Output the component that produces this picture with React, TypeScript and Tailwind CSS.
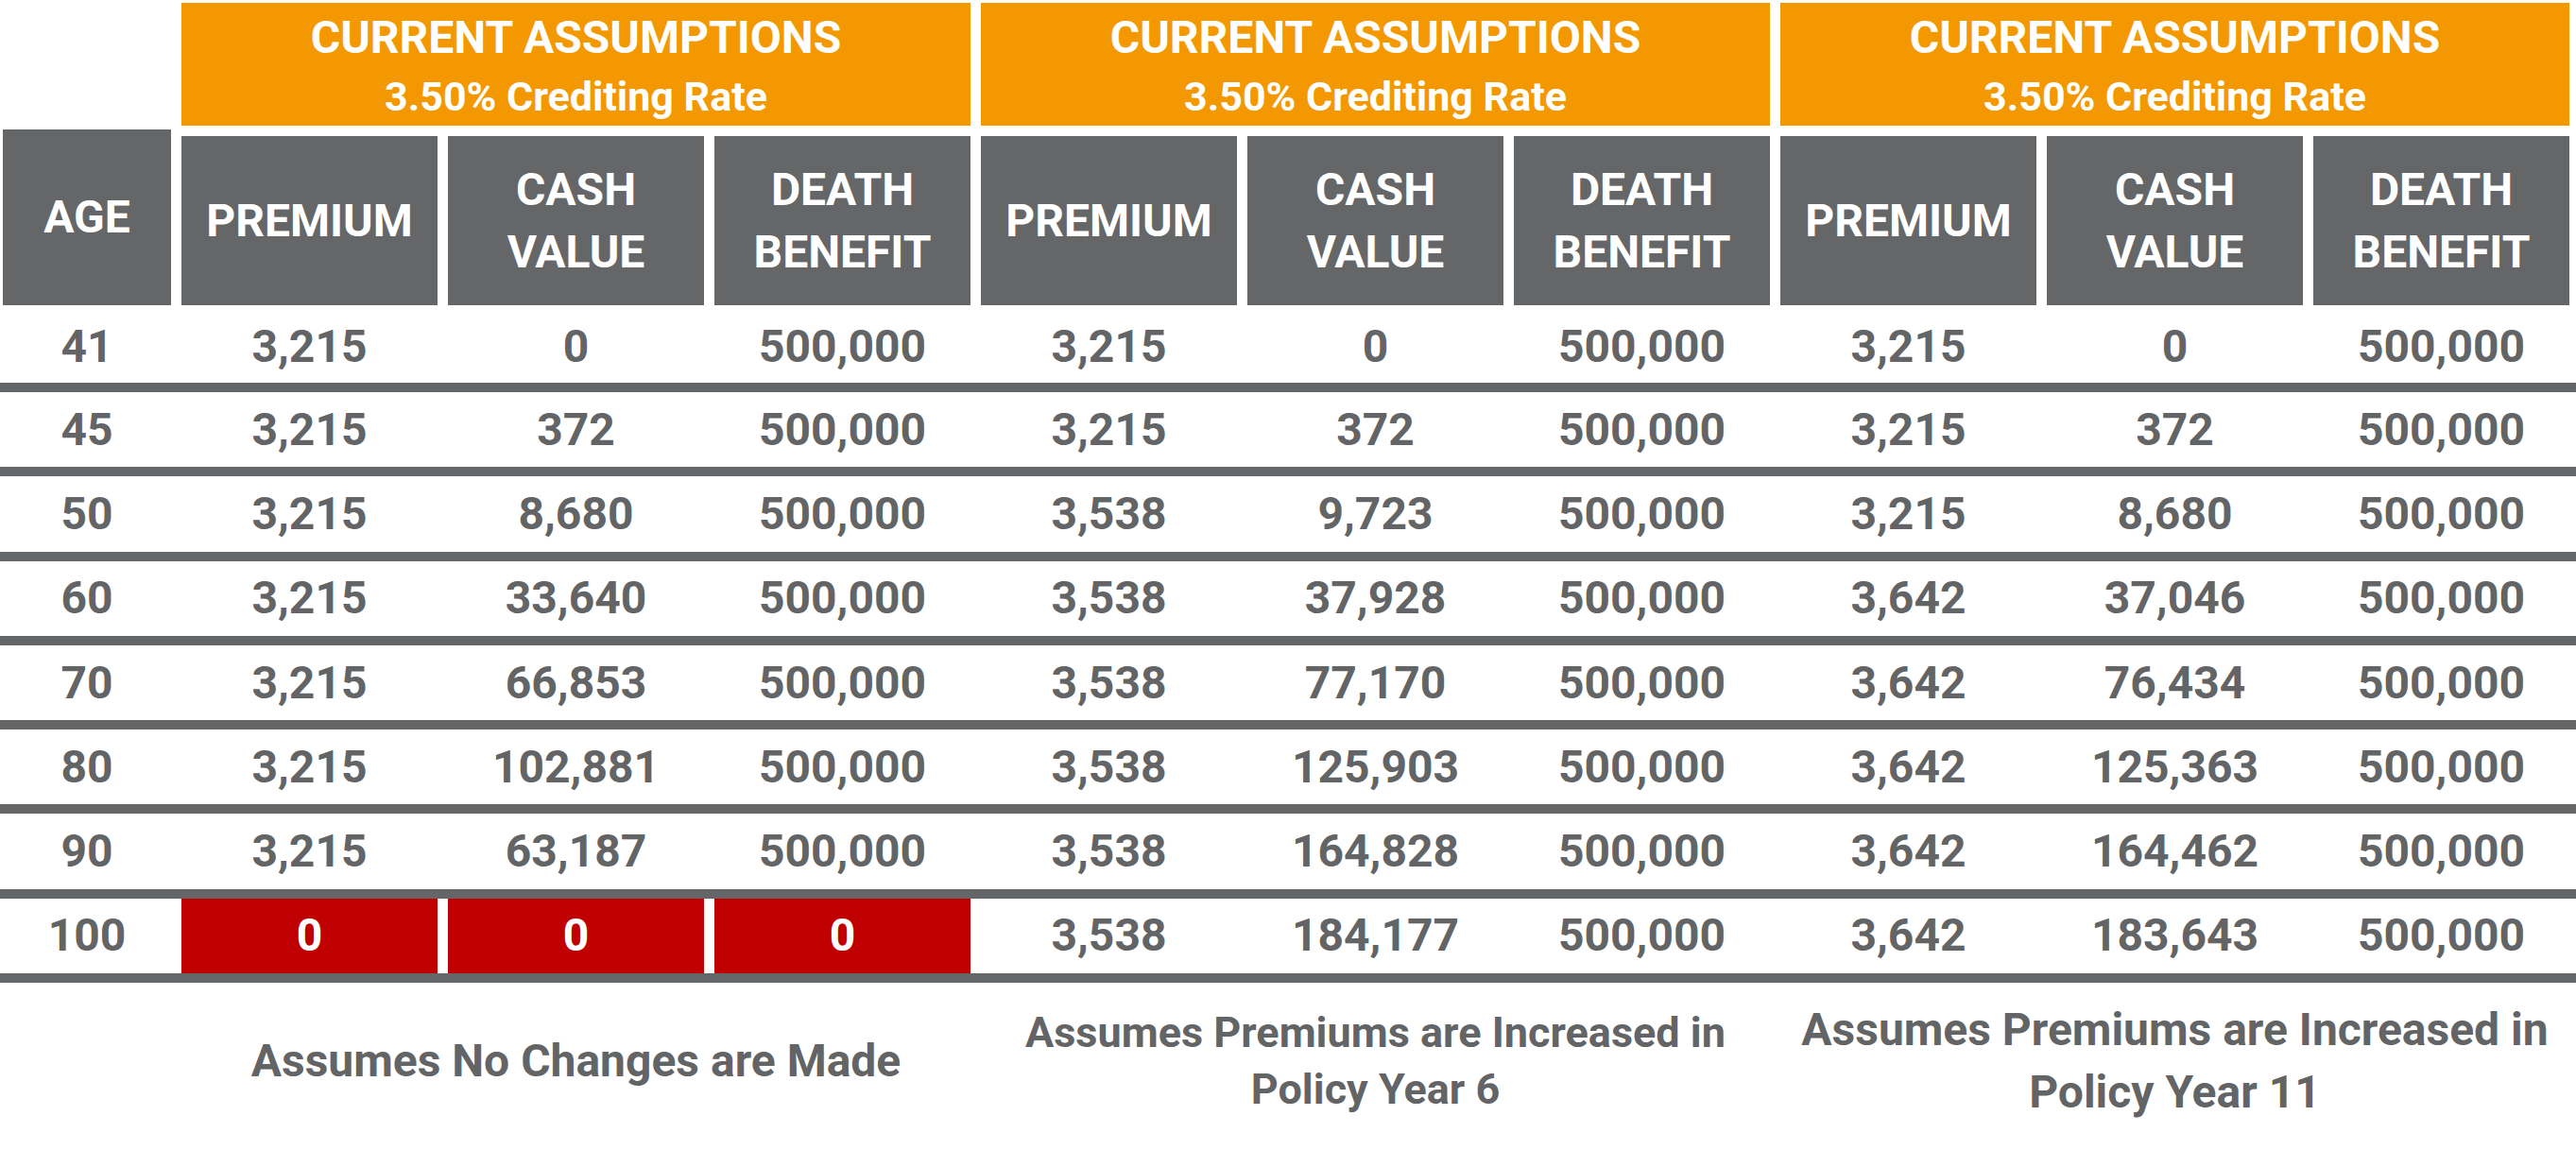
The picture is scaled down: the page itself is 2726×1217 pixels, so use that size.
import React from "react";

// Illustration table: three premium scenarios side by side
interface Row {
  age: number;
  values: string[];
  lapsed?: boolean;
}

const rows: Row[] = [
  { age: 41, values: ["3,215", "0", "500,000", "3,215", "0", "500,000", "3,215", "0", "500,000"] },
  { age: 45, values: ["3,215", "372", "500,000", "3,215", "372", "500,000", "3,215", "372", "500,000"] },
  { age: 50, values: ["3,215", "8,680", "500,000", "3,538", "9,723", "500,000", "3,215", "8,680", "500,000"] },
  { age: 60, values: ["3,215", "33,640", "500,000", "3,538", "37,928", "500,000", "3,642", "37,046", "500,000"] },
  { age: 70, values: ["3,215", "66,853", "500,000", "3,538", "77,170", "500,000", "3,642", "76,434", "500,000"] },
  { age: 80, values: ["3,215", "102,881", "500,000", "3,538", "125,903", "500,000", "3,642", "125,363", "500,000"] },
  { age: 90, values: ["3,215", "63,187", "500,000", "3,538", "164,828", "500,000", "3,642", "164,462", "500,000"] },
  { age: 100, values: ["0", "0", "0", "3,538", "184,177", "500,000", "3,642", "183,643", "500,000"], lapsed: true },
];

const grid = "grid grid-cols-[178px_repeat(9,271px)] gap-x-[11px] pl-[3px]";

const Separator = () => <div className="h-[10px] w-full bg-[#656668]" />;

const HeaderCell = ({ lines }: { lines: string[] }) => (
  <div className="mt-[7px] flex h-[179px] flex-col items-center justify-center bg-[#656668] text-[48px] leading-[66px] text-white">
    {lines.map((l) => (
      <span key={l}>{l}</span>
    ))}
  </div>
);

const App = () => {
  return (
    <div className="w-[2726px] h-[1217px] bg-white font-['Roboto',sans-serif] font-bold text-[#636466]">
      {/* scenario headers */}
      <div className={`${grid} pt-[3px]`}>
        <div />
        {[0, 1, 2].map((i) => (
          <div
            key={i}
            className="col-span-3 flex h-[130px] flex-col items-center justify-center bg-[#f39800] pt-[5px] text-white"
          >
            <span className="text-[48px] leading-[62px]">CURRENT ASSUMPTIONS</span>
            <span className="text-[43px] leading-[62px]">3.50% Crediting Rate</span>
          </div>
        ))}
      </div>

      {/* column headers */}
      <div className={`${grid} mt-[4px]`}>
        <div className="flex h-[186px] items-center justify-center bg-[#656668] text-[48px] text-white">
          AGE
        </div>
        {[0, 1, 2].map((i) => (
          <React.Fragment key={i}>
            <HeaderCell lines={["PREMIUM"]} />
            <HeaderCell lines={["CASH", "VALUE"]} />
            <HeaderCell lines={["DEATH", "BENEFIT"]} />
          </React.Fragment>
        ))}
      </div>

      {/* data rows */}
      {rows.map((row, idx) => (
        <React.Fragment key={row.age}>
          {idx > 0 && <Separator />}
          <div className={`${grid} text-[48px] ${idx === 0 ? "h-[82px] pt-[6px]" : "h-[79.3px]"}`}>
            <div className="flex items-center justify-center">{row.age}</div>
            {row.values.map((v, j) => (
              <div
                key={j}
                className={`flex items-center justify-center ${
                  row.lapsed && j < 3 ? "bg-[#c00000] text-white" : ""
                }`}
              >
                {v}
              </div>
            ))}
          </div>
        </React.Fragment>
      ))}
      <Separator />

      {/* scenario notes */}
      <div className={`${grid} h-[166px] items-center`}>
        <div />
        <div className="col-span-3 text-center text-[48px] leading-[58px]">Assumes No Changes are Made</div>
        <div className="col-span-3 text-center text-[45px] leading-[60px]">
          Assumes Premiums are Increased in
          <br />
          Policy Year 6
        </div>
        <div className="col-span-3 text-center text-[48px] leading-[66px]">
          Assumes Premiums are Increased in
          <br />
          Policy Year 11
        </div>
      </div>
    </div>
  );
};

export default App;
